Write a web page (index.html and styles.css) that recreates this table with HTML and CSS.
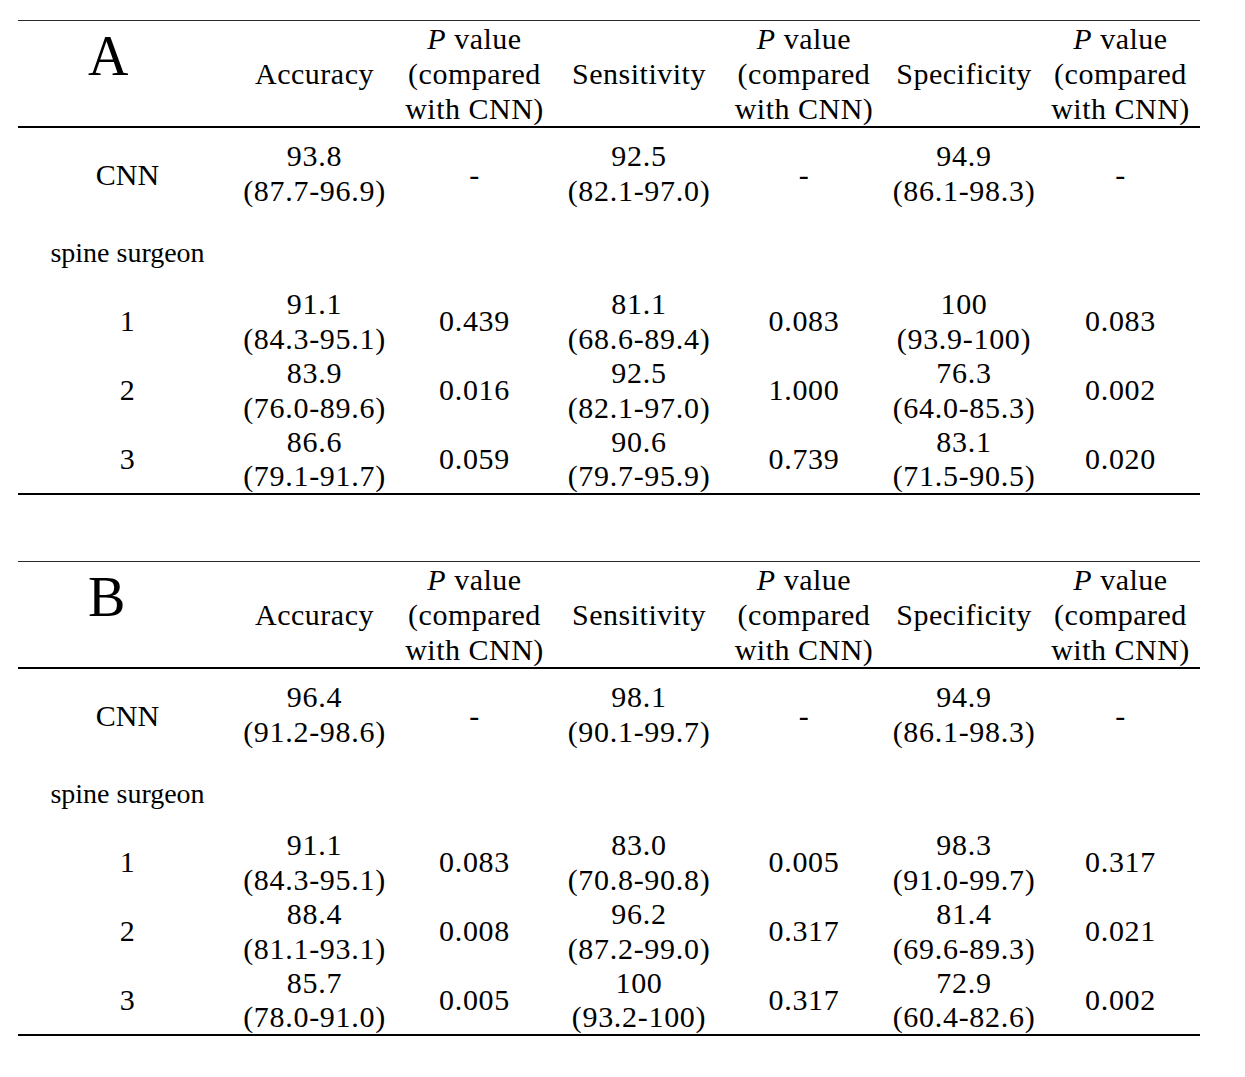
FILE: index.html
```html
<!DOCTYPE html>
<html lang="en">
<head>
<meta charset="utf-8">
<title>CNN vs spine surgeon</title>
<link rel="stylesheet" href="styles.css">
</head>
<body>
<div class="page">
  <table class="result result-a">
    <colgroup>
      <col class="c-label"><col class="c-acc"><col class="c-p1"><col class="c-sens"><col class="c-p2"><col class="c-spec"><col class="c-p3">
    </colgroup>
    <thead>
      <tr class="head">
        <th class="panel">A</th>
        <th>Accuracy</th>
        <th><i>P</i> value<br>(compared<br>with CNN)</th>
        <th>Sensitivity</th>
        <th><i>P</i> value<br>(compared<br>with CNN)</th>
        <th>Specificity</th>
        <th><i>P</i> value<br>(compared<br>with CNN)</th>
      </tr>
    </thead>
    <tbody>
      <tr class="cnn">
        <td class="lbl">CNN</td>
        <td>93.8<br>(87.7-96.9)</td><td class="dash">-</td>
        <td>92.5<br>(82.1-97.0)</td><td class="dash">-</td>
        <td>94.9<br>(86.1-98.3)</td><td class="dash">-</td>
      </tr>
      <tr class="group">
        <td class="grp">spine surgeon</td><td></td><td></td><td></td><td></td><td></td><td></td>
      </tr>
      <tr class="row r1">
        <td>1</td><td>91.1<br>(84.3-95.1)</td><td>0.439</td><td>81.1<br>(68.6-89.4)</td><td>0.083</td><td>100<br>(93.9-100)</td><td>0.083</td>
      </tr>
      <tr class="row r2">
        <td>2</td><td>83.9<br>(76.0-89.6)</td><td>0.016</td><td>92.5<br>(82.1-97.0)</td><td>1.000</td><td>76.3<br>(64.0-85.3)</td><td>0.002</td>
      </tr>
      <tr class="row r3">
        <td>3</td><td>86.6<br>(79.1-91.7)</td><td>0.059</td><td>90.6<br>(79.7-95.9)</td><td>0.739</td><td>83.1<br>(71.5-90.5)</td><td>0.020</td>
      </tr>
    </tbody>
  </table>

  <table class="result result-b">
    <colgroup>
      <col class="c-label"><col class="c-acc"><col class="c-p1"><col class="c-sens"><col class="c-p2"><col class="c-spec"><col class="c-p3">
    </colgroup>
    <thead>
      <tr class="head">
        <th class="panel">B</th>
        <th>Accuracy</th>
        <th><i>P</i> value<br>(compared<br>with CNN)</th>
        <th>Sensitivity</th>
        <th><i>P</i> value<br>(compared<br>with CNN)</th>
        <th>Specificity</th>
        <th><i>P</i> value<br>(compared<br>with CNN)</th>
      </tr>
    </thead>
    <tbody>
      <tr class="cnn">
        <td class="lbl">CNN</td>
        <td>96.4<br>(91.2-98.6)</td><td class="dash">-</td>
        <td>98.1<br>(90.1-99.7)</td><td class="dash">-</td>
        <td>94.9<br>(86.1-98.3)</td><td class="dash">-</td>
      </tr>
      <tr class="group">
        <td class="grp">spine surgeon</td><td></td><td></td><td></td><td></td><td></td><td></td>
      </tr>
      <tr class="row r1">
        <td>1</td><td>91.1<br>(84.3-95.1)</td><td>0.083</td><td>83.0<br>(70.8-90.8)</td><td>0.005</td><td>98.3<br>(91.0-99.7)</td><td>0.317</td>
      </tr>
      <tr class="row r2">
        <td>2</td><td>88.4<br>(81.1-93.1)</td><td>0.008</td><td>96.2<br>(87.2-99.0)</td><td>0.317</td><td>81.4<br>(69.6-89.3)</td><td>0.021</td>
      </tr>
      <tr class="row r3">
        <td>3</td><td>85.7<br>(78.0-91.0)</td><td>0.005</td><td>100<br>(93.2-100)</td><td>0.317</td><td>72.9<br>(60.4-82.6)</td><td>0.002</td>
      </tr>
    </tbody>
  </table>
</div>
</body>
</html>
```

FILE: styles.css
```css
html, body {
  margin: 0;
  padding: 0;
  background: #fff;
}

.page {
  padding: 20px 0 0 18px;
  font-family: "Liberation Serif", "Times New Roman", serif;
  color: #000;
}

.result {
  border-collapse: separate;
  border-spacing: 0;
  table-layout: fixed;
  width: 1182px;
  font-size: 30px;
  letter-spacing: 0.7px;
}

.result-a {
  margin-bottom: 66px;
}

.c-label { width: 219px; }
.c-acc { width: 155px; }
.c-p1 { width: 165px; }
.c-sens { width: 164px; }
.c-p2 { width: 166px; }
.c-spec { width: 154px; }
.c-p3 { width: 159px; }

.result th,
.result td {
  padding: 0;
  text-align: center;
  vertical-align: middle;
  white-space: nowrap;
  font-weight: normal;
}

.head th {
  line-height: 35px;
  letter-spacing: 0.5px;
  border-top: 1px solid #2a2a2a;
  border-bottom: 2px solid #000;
}

.head th.panel {
  vertical-align: top;
  text-align: left;
  font-size: 56px;
  line-height: 56px;
  letter-spacing: 0;
  padding: 7px 0 0 70px;
}

.cnn td {
  line-height: 35px;
  padding-top: 9.5px;
  padding-bottom: 9.5px;
}

.cnn .lbl {
  letter-spacing: 0;
  padding-top: 14px;
}

.cnn .dash {
  padding-top: 14px;
}

.group td {
  line-height: 35px;
  padding-top: 17.5px;
  padding-bottom: 17.5px;
}

.group .grp {
  font-size: 28px;
  letter-spacing: 0;
}

.row td {
  line-height: 34.5px;
}

.row.r3 td {
  line-height: 34px;
  border-bottom: 2px solid #000;
}
```
